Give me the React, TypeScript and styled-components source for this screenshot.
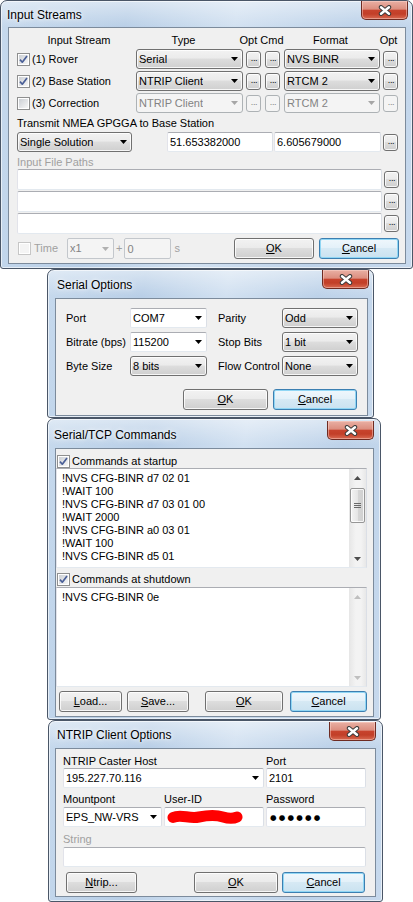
import React from "react";
import styled, { createGlobalStyle, css } from "styled-components";

const UI = `"Liberation Sans", Arial, sans-serif`;
const CAPTION = `"Liberation Sans", Arial, sans-serif`;

const Global = createGlobalStyle`
  *, *::before, *::after { box-sizing: border-box; }
  html, body { margin: 0; padding: 0; background: #ffffff; }
  body { font-family: ${UI}; font-size: 11px; color: #000; }
`;

/* ---------- window chrome ---------- */

const Desktop = styled.div`
  width: 413px;
  height: 902px;
  overflow: hidden;
  display: flex;
  flex-direction: column;
  align-items: flex-start;
  background: #fff;
`;

const Frame = styled.section<{ $x: number; $w: number; $h: number }>`
  flex: none;
  margin-left: ${(p) => p.$x}px;
  width: ${(p) => p.$w}px;
  height: ${(p) => p.$h}px;
  display: flex;
  flex-direction: column;
  border: 1px solid #4a5667;
  border-radius: 7px 7px 3px 3px;
  overflow: hidden;
  background: linear-gradient(180deg, rgba(255, 255, 255, 0.45) 0px, rgba(255, 255, 255, 0) 26px),
    linear-gradient(100deg, #c6d9ed 0%, #b9cfe7 28%, #d2e1f1 52%, #bdd2e9 78%, #c7d9ed 100%);
  box-shadow: inset 0 0 0 1px rgba(255, 255, 255, 0.6);
`;

const TitleBar = styled.header<{ $h: number }>`
  flex: none;
  height: ${(p) => p.$h}px;
  display: flex;
  align-items: flex-start;
  justify-content: space-between;
`;

const Caption = styled.h1<{ $x: number; $y: number }>`
  margin: ${(p) => p.$y - 8}px 0 0 ${(p) => p.$x}px;
  font: 400 12px/16px ${CAPTION};
  color: #000;
  white-space: nowrap;
  text-shadow: 0 0 7px rgba(255, 255, 255, 0.95), 0 0 3px rgba(255, 255, 255, 0.9);
`;

const CloseBtn = styled.div<{ $top: number; $right: number }>`
  flex: none;
  margin: ${(p) => p.$top}px ${(p) => p.$right}px 0 0;
  width: 47px;
  height: 19px;
  display: flex;
  align-items: center;
  justify-content: center;
  border: 1px solid #6e2b22;
  border-top: none;
  border-radius: 0 0 5px 5px;
  background: linear-gradient(180deg, #e9b0a4 0%, #dc8e7f 45%, #c7432d 52%, #c23f28 72%, #d86a52 100%);
  box-shadow: inset 0 0 0 1px rgba(255, 220, 210, 0.45);
`;

const Client = styled.div<{ $ml: number; $mr: number; $mb: number }>`
  flex: 1;
  min-height: 0;
  margin: 0 ${(p) => p.$mr}px ${(p) => p.$mb}px ${(p) => p.$ml}px;
  background: #f0f0f0;
  border: 1px solid #7c8b9c;
  display: flex;
  flex-direction: column;
`;

const CloseGlyph = () => (
  <svg width="14" height="11" viewBox="0 0 14 11">
    <path d="M3 2.2 L11 8.8 M11 2.2 L3 8.8" stroke="#3d3d3d" strokeWidth="4.4" strokeLinecap="round" />
    <path d="M3 2.2 L11 8.8 M11 2.2 L3 8.8" stroke="#ffffff" strokeWidth="2.4" strokeLinecap="round" />
  </svg>
);

type WinProps = {
  title: string;
  x: number;
  w: number;
  h: number;
  titleH: number;
  tx: number;
  ty: number;
  closeTop: number;
  closeRight: number;
  ml: number;
  mr: number;
  mb: number;
  children: React.ReactNode;
};

const Window = (p: WinProps) => (
  <Frame $x={p.x} $w={p.w} $h={p.h}>
    <TitleBar $h={p.titleH}>
      <Caption $x={p.tx} $y={p.ty}>{p.title}</Caption>
      <CloseBtn $top={p.closeTop} $right={p.closeRight}>
        <CloseGlyph />
      </CloseBtn>
    </TitleBar>
    <Client $ml={p.ml} $mr={p.mr} $mb={p.mb}>{p.children}</Client>
  </Frame>
);

/* ---------- controls ---------- */

const uiFont = css`
  font-family: ${UI};
  font-size: 11px;
  line-height: 13px;
`;

const faceNormal = css`
  border: 1px solid #707070;
  border-radius: 3px;
  background: linear-gradient(180deg, #f2f2f2 0%, #ebebeb 45%, #dddddd 50%, #cfcfcf 100%);
  box-shadow: inset 0 0 0 1px rgba(255, 255, 255, 0.8);
  color: #000;
`;

const faceDefault = css`
  border: 1px solid #3c7fb1;
  background: linear-gradient(180deg, #eff7fc 0%, #e4f1f9 45%, #d6e9f4 50%, #cae2f0 100%);
  box-shadow: inset 0 0 0 1px #90d6f4;
`;

const faceDisabled = css`
  border: 1px solid #adb2b5;
  background: #f4f4f4;
  box-shadow: none;
  color: #838383;
`;

const editFrame = css`
  background: #fff;
  border: 1px solid;
  border-color: #abadb3 #dbdfe6 #e3e9ef #e2e3ea;
  border-radius: 2px;
`;

const PushButton = styled.button<{ $w: number; $h?: number; $def?: boolean; $ml?: number }>`
  flex: none;
  width: ${(p) => p.$w}px;
  height: ${(p) => p.$h ?? 21}px;
  margin: 0 0 0 ${(p) => p.$ml ?? 0}px;
  padding: 0;
  ${uiFont}
  display: flex;
  align-items: center;
  justify-content: center;
  ${faceNormal}
  ${(p) => p.$def && faceDefault}
`;

const DotButton = styled.button<{ $disabled?: boolean; $ml?: number }>`
  flex: none;
  width: 15px;
  height: 17px;
  margin: 0 0 0 ${(p) => p.$ml ?? 0}px;
  padding: 0 0 3px 1px;
  align-self: center;
  font-family: ${UI};
  font-size: 9px;
  line-height: 11px;
  display: flex;
  align-items: flex-end;
  justify-content: center;
  letter-spacing: -0.3px;
  ${faceNormal}
  ${(p) => p.$disabled && faceDisabled}
`;

const DropList = styled.div<{ $w?: number; $disabled?: boolean; $h?: number }>`
  flex: none;
  ${(p) => (p.$w ? `width: ${p.$w}px;` : "")}
  height: ${(p) => p.$h ?? 20}px;
  display: flex;
  align-items: center;
  justify-content: space-between;
  padding: 0 4px 0 2px;
  ${faceNormal}
  ${(p) => p.$disabled && faceDisabled}
`;

const EditCombo = styled.div<{ $w?: number; $disabled?: boolean; $h?: number }>`
  flex: none;
  ${(p) => (p.$w ? `width: ${p.$w}px;` : "")}
  height: ${(p) => p.$h ?? 20}px;
  display: flex;
  align-items: center;
  justify-content: space-between;
  padding: 0 4px 0 2px;
  ${editFrame}
  ${(p) =>
    p.$disabled &&
    css`
      background: #f4f4f4;
      border-color: #c3c7cc;
      color: #838383;
    `}
`;

const TextBox = styled.div<{ $w?: number; $ml?: number; $disabled?: boolean; $h?: number }>`
  ${(p) => (p.$w ? `flex: none; width: ${p.$w}px;` : "flex: 1; min-width: 0;")}
  height: ${(p) => p.$h ?? 20}px;
  margin-left: ${(p) => p.$ml ?? 0}px;
  display: flex;
  align-items: center;
  padding: 0 2px;
  white-space: nowrap;
  overflow: hidden;
  ${editFrame}
  ${(p) =>
    p.$disabled &&
    css`
      background: #f4f4f4;
      border-color: #c3c7cc;
      color: #838383;
    `}
`;

const Value = styled.span`
  white-space: nowrap;
  overflow: hidden;
  line-height: 13px;
`;

const Arrow = ({ color = "#000" }: { color?: string }) => (
  <svg width="7" height="4" viewBox="0 0 7 4" style={{ flex: "none" }}>
    <path d="M0 0H7L3.5 4Z" fill={color} />
  </svg>
);

const CheckSvg = styled.svg`
  flex: none;
  display: block;
`;

const CheckBox = ({ checked, disabled }: { checked?: boolean; disabled?: boolean }) => (
  <CheckSvg width="13" height="13" viewBox="0 0 13 13">
    <defs>
      <linearGradient id={disabled ? "cbd" : "cbe"} x1="0" y1="0" x2="1" y2="1">
        <stop offset="0" stopColor={disabled ? "#f4f4f4" : "#cbcfd4"} />
        <stop offset="1" stopColor={disabled ? "#f4f4f4" : "#f7f7f7"} />
      </linearGradient>
    </defs>
    <rect x="0.5" y="0.5" width="12" height="12" fill="#fff" stroke={disabled ? "#c6c6c6" : "#8e8f8f"} />
    <rect x="2" y="2" width="9" height="9" fill={`url(#${disabled ? "cbd" : "cbe"})`} />
    {checked && (
      <path d="M3 6.6 L5.3 9.2 L10 3" fill="none" stroke="#4a5f97" strokeWidth="1.7" strokeLinejoin="round" />
    )}
  </CheckSvg>
);

const Label = styled.span<{ $gray?: boolean; $w?: number; $ml?: number }>`
  flex: none;
  ${(p) => (p.$w ? `width: ${p.$w}px;` : "")}
  margin-left: ${(p) => p.$ml ?? 0}px;
  line-height: 13px;
  white-space: nowrap;
  color: ${(p) => (p.$gray ? "#a0a0a0" : "#000")};
`;

/* ---------- Input Streams ---------- */

const StreamsBody = styled.div`
  display: flex;
  flex-direction: column;
  padding: 5px 0 0 8px;
`;

const StreamGrid = styled.div`
  display: grid;
  grid-template-columns: 116px 107px 16px 16px 96px 15px;
  grid-template-rows: 14px 20px 20px 20px;
  column-gap: 3px;
  row-gap: 2px;
`;

const HeadCell = styled.div<{ $span?: number; $pl?: number; $pr?: number }>`
  grid-column: span ${(p) => p.$span ?? 1};
  display: flex;
  justify-content: center;
  align-items: center;
  white-space: nowrap;
  padding-left: ${(p) => p.$pl ?? 0}px;
  padding-right: ${(p) => p.$pr ?? 0}px;
  line-height: 14px;
`;

const StreamName = styled.div`
  display: flex;
  align-items: center;
  gap: 2px;
`;

const Row = styled.div<{ $mt?: number; $h?: number }>`
  display: flex;
  align-items: center;
  margin-top: ${(p) => p.$mt ?? 0}px;
  ${(p) => (p.$h ? `height: ${p.$h}px;` : "")}
`;

const FileRows = styled.div`
  display: flex;
  flex-direction: column;
  gap: 1px;
  padding-right: 6px;
`;

const Spacer = styled.div<{ $w?: number }>`
  ${(p) => (p.$w !== undefined ? `flex: none; width: ${p.$w}px;` : "flex: 1;")}
`;

const streams = [
  { name: "(1) Rover", checked: true, type: "Serial", format: "NVS BINR", disabled: false },
  { name: "(2) Base Station", checked: true, type: "NTRIP Client", format: "RTCM 2", disabled: false },
  { name: "(3) Correction", checked: false, type: "NTRIP Client", format: "RTCM 2", disabled: true },
];

const InputStreams = () => (
  <Window
    title="Input Streams"
    x={0}
    w={413}
    h={269}
    titleH={26}
    tx={6}
    ty={14}
    closeTop={0}
    closeRight={4}
    ml={7}
    mr={6}
    mb={4}
  >
    <StreamsBody>
      <StreamGrid>
        <HeadCell $pl={8}>Input Stream</HeadCell>
        <HeadCell $pr={12}>Type</HeadCell>
        <HeadCell $span={2} $pr={4}>
          Opt Cmd
        </HeadCell>
        <HeadCell $pr={3}>Format</HeadCell>
        <HeadCell $pr={4}>Opt</HeadCell>
        {streams.map((s) => (
          <React.Fragment key={s.name}>
            <StreamName>
              <CheckBox checked={s.checked} />
              <Label>{s.name}</Label>
            </StreamName>
            <DropList $disabled={s.disabled}>
              <Value>{s.type}</Value>
              <Arrow color={s.disabled ? "#a6a6a6" : "#000"} />
            </DropList>
            <DotButton $disabled={s.disabled}>...</DotButton>
            <DotButton $disabled={s.disabled}>...</DotButton>
            <DropList $disabled={s.disabled}>
              <Value>{s.format}</Value>
              <Arrow color={s.disabled ? "#a6a6a6" : "#000"} />
            </DropList>
            <DotButton $disabled={s.disabled}>...</DotButton>
          </React.Fragment>
        ))}
      </StreamGrid>

      <Row $mt={3} $h={14}>
        <Label>Transmit NMEA GPGGA to Base Station</Label>
      </Row>
      <Row $mt={2}>
        <DropList $w={115}>
          <Value>Single Solution</Value>
          <Arrow />
        </DropList>
        <TextBox $w={106} $ml={35}>
          51.653382000
        </TextBox>
        <TextBox $w={107} $ml={1}>
          6.605679000
        </TextBox>
        <DotButton $ml={2}>...</DotButton>
      </Row>

      <Row $mt={4} $h={13}>
        <Label $gray>Input File Paths</Label>
      </Row>
      <FileRows>
        {[0, 1, 2].map((i) => (
          <Row key={i}>
            <TextBox $h={21} />
            <DotButton $ml={2}>...</DotButton>
          </Row>
        ))}
      </FileRows>

      <Row $mt={4} $h={21}>
        <Spacer $w={1} />
        <CheckBox disabled />
        <Label $gray $ml={3} $w={33}>
          Time
        </Label>
        <EditCombo $w={47} $h={21} $disabled>
          <Value>x1</Value>
          <Arrow color="#b0b0b0" />
        </EditCombo>
        <Label $gray $ml={2}>
          +
        </Label>
        <TextBox $w={47} $ml={2} $h={21} $disabled>
          0
        </TextBox>
        <Label $gray $ml={3}>
          s
        </Label>
        <Spacer />
        <PushButton $w={80}>
          <span>
            <u>O</u>K
          </span>
        </PushButton>
        <PushButton $w={80} $ml={5} $def>
          <span>
            <u>C</u>ancel
          </span>
        </PushButton>
        <Spacer $w={6} />
      </Row>
    </StreamsBody>
  </Window>
);

/* ---------- Serial Options ---------- */

const SerialBody = styled.div`
  display: flex;
  flex-direction: column;
  padding: 9px 10px 0 10px;
`;

const SerialGrid = styled.div`
  display: grid;
  grid-template-columns: 64px 88px 64px 76px;
  grid-auto-rows: 20px;
  row-gap: 4px;
  align-items: center;
`;

const ButtonRow = styled.div<{ $mt: number; $pr?: number }>`
  display: flex;
  align-items: center;
  justify-content: flex-end;
  margin-top: ${(p) => p.$mt}px;
  padding-right: ${(p) => p.$pr ?? 0}px;
`;

const SerialOptions = () => (
  <Window
    title="Serial Options"
    x={47}
    w={327}
    h={149}
    titleH={28}
    tx={9}
    ty={15}
    closeTop={0}
    closeRight={4}
    ml={7}
    mr={5}
    mb={1}
  >
    <SerialBody>
      <SerialGrid>
        <Label>Port</Label>
        <EditCombo $w={77}>
          <Value>COM7</Value>
          <Arrow />
        </EditCombo>
        <Label>Parity</Label>
        <DropList>
          <Value>Odd</Value>
          <Arrow />
        </DropList>

        <Label>Bitrate (bps)</Label>
        <EditCombo $w={77}>
          <Value>115200</Value>
          <Arrow />
        </EditCombo>
        <Label>Stop Bits</Label>
        <DropList>
          <Value>1 bit</Value>
          <Arrow />
        </DropList>

        <Label>Byte Size</Label>
        <DropList $w={77}>
          <Value>8 bits</Value>
          <Arrow />
        </DropList>
        <Label>Flow Control</Label>
        <DropList>
          <Value>None</Value>
          <Arrow />
        </DropList>
      </SerialGrid>
      <ButtonRow $mt={13}>
        <PushButton $w={85}>
          <span>
            <u>O</u>K
          </span>
        </PushButton>
        <PushButton $w={84} $ml={5} $def>
          <span>
            <u>C</u>ancel
          </span>
        </PushButton>
      </ButtonRow>
    </SerialBody>
  </Window>
);

/* ---------- Serial/TCP Commands ---------- */

const CmdBody = styled.div`
  display: flex;
  flex-direction: column;
  padding: 6px 6px 0 0;
`;

const CheckRow = styled.div<{ $mt?: number }>`
  display: flex;
  align-items: center;
  height: 13px;
  margin-top: ${(p) => p.$mt ?? 0}px;
  padding-left: 1px;
  gap: 2px;
`;

const Memo = styled.div<{ $mt?: number }>`
  height: 100px;
  margin-top: ${(p) => p.$mt ?? 0}px;
  display: flex;
  border: 1px solid;
  border-color: #abadb3 #dbdfe6 #e3e9ef #e2e3ea;
  background: #fff;
`;

const MemoText = styled.div`
  flex: 1;
  padding: 3px 0 0 5px;
  line-height: 13px;
  white-space: pre;
  overflow: hidden;
`;

const VScroll = styled.div`
  flex: none;
  width: 17px;
  display: flex;
  flex-direction: column;
  background: linear-gradient(90deg, #e6e6e6 0%, #f3f3f3 40%, #f3f3f3 70%, #e8e8e8 100%);
`;

const ScrollArrow = styled.div`
  flex: none;
  height: 17px;
  display: flex;
  align-items: center;
  justify-content: center;
`;

const Thumb = styled.div`
  flex: none;
  height: 35px;
  margin: 2px 1px 0 1px;
  border: 1px solid #969696;
  border-radius: 2px;
  background: linear-gradient(90deg, #f4f4f4 0%, #e6e6e6 50%, #d6d6d6 51%, #d0d0d0 100%);
  box-shadow: inset 0 0 0 1px rgba(255, 255, 255, 0.8);
  display: flex;
  align-items: center;
  justify-content: center;
`;

const Tri = ({ up, color }: { up?: boolean; color: string }) => (
  <svg width="7" height="4" viewBox="0 0 7 4">
    <path d={up ? "M0 4H7L3.5 0Z" : "M0 0H7L3.5 4Z"} fill={color} />
  </svg>
);

const Grip = () => (
  <svg width="7" height="6" viewBox="0 0 7 6">
    <path d="M0 0.5H7M0 2.5H7M0 4.5H7" stroke="#6a6a6a" strokeWidth="1" />
  </svg>
);

const startup = [
  "!NVS CFG-BINR d7 02 01",
  "!WAIT 100",
  "!NVS CFG-BINR d7 03 01 00",
  "!WAIT 2000",
  "!NVS CFG-BINR a0 03 01",
  "!WAIT 100",
  "!NVS CFG-BINR d5 01",
];

const CmdButtons = styled.div`
  display: flex;
  align-items: center;
  margin-top: 4px;
  padding-left: 3px;
`;

const Commands = () => (
  <Window
    title="Serial/TCP Commands"
    x={47}
    w={334}
    h={302}
    titleH={29}
    tx={6}
    ty={16}
    closeTop={2}
    closeRight={6}
    ml={7}
    mr={6}
    mb={2}
  >
    <CmdBody>
      <CheckRow>
        <CheckBox checked />
        <Label>Commands at startup</Label>
      </CheckRow>
      <Memo>
        <MemoText>{startup.join("\n")}</MemoText>
        <VScroll>
          <ScrollArrow>
            <Tri up color="#4d4d4d" />
          </ScrollArrow>
          <Thumb>
            <Grip />
          </Thumb>
          <Spacer />
          <ScrollArrow>
            <Tri color="#4d4d4d" />
          </ScrollArrow>
        </VScroll>
      </Memo>
      <CheckRow $mt={5}>
        <CheckBox checked />
        <Label>Commands at shutdown</Label>
      </CheckRow>
      <Memo $mt={1}>
        <MemoText>!NVS CFG-BINR 0e</MemoText>
        <VScroll>
          <ScrollArrow>
            <Tri up color="#bfbfbf" />
          </ScrollArrow>
          <Spacer />
          <ScrollArrow>
            <Tri color="#bfbfbf" />
          </ScrollArrow>
        </VScroll>
      </Memo>
      <CmdButtons>
        <PushButton $w={63}>
          <span>
            <u>L</u>oad...
          </span>
        </PushButton>
        <PushButton $w={62} $ml={5}>
          <span>
            <u>S</u>ave...
          </span>
        </PushButton>
        <PushButton $w={78} $ml={16}>
          <span>
            <u>O</u>K
          </span>
        </PushButton>
        <PushButton $w={77} $ml={7} $def>
          <span>
            <u>C</u>ancel
          </span>
        </PushButton>
      </CmdButtons>
    </CmdBody>
  </Window>
);

/* ---------- NTRIP Client Options ---------- */

const NtripBody = styled.div`
  display: flex;
  flex-direction: column;
  padding: 6px 8px 0 7px;
`;

const FieldGrid = styled.div<{ $h: number; $mt?: number }>`
  display: grid;
  grid-template-columns: 99px 100px 100px;
  column-gap: 2px;
  height: ${(p) => p.$h}px;
  margin-top: ${(p) => p.$mt ?? 0}px;
  align-items: center;
`;

const Span = styled.div<{ $n: number }>`
  grid-column: span ${(p) => p.$n};
  display: flex;
  min-width: 0;
`;

const Dots = styled.span`
  font-family: "DejaVu Sans", sans-serif;
  font-size: 7.5px;
  line-height: 13px;
  letter-spacing: 2.2px;
  padding-left: 1px;
`;

const Scribble = () => (
  <svg width="80" height="16" viewBox="0 0 80 16" style={{ display: "block" }}>
    <path
      d="M6 8.5 C 14 5, 22 10, 32 8 S 48 5.5, 56 8 S 68 9, 70 8"
      fill="none"
      stroke="#ff0000"
      strokeWidth="11"
      strokeLinecap="round"
    />
  </svg>
);

const Ntrip = () => (
  <Window
    title="NTRIP Client Options"
    x={48}
    w={335}
    h={182}
    titleH={27}
    tx={8}
    ty={14}
    closeTop={1}
    closeRight={6}
    ml={6}
    mr={6}
    mb={4}
  >
    <NtripBody>
      <FieldGrid $h={13}>
        <Span $n={2}>
          <Label>NTRIP Caster Host</Label>
        </Span>
        <Label>Port</Label>
      </FieldGrid>
      <FieldGrid $h={20}>
        <Span $n={2}>
          <EditCombo style={{ flex: 1 }}>
            <Value>195.227.70.116</Value>
            <Arrow />
          </EditCombo>
        </Span>
        <TextBox>2101</TextBox>
      </FieldGrid>
      <FieldGrid $h={13} $mt={5}>
        <Label>Mountpont</Label>
        <Label>User-ID</Label>
        <Label>Password</Label>
      </FieldGrid>
      <FieldGrid $h={20} $mt={1}>
        <EditCombo>
          <Value>EPS_NW-VRS</Value>
          <Arrow />
        </EditCombo>
        <TextBox>
          <Scribble />
        </TextBox>
        <TextBox>
          <Dots>●●●●●●</Dots>
        </TextBox>
      </FieldGrid>
      <FieldGrid $h={13} $mt={6}>
        <Label $gray>String</Label>
      </FieldGrid>
      <FieldGrid $h={20} $mt={1}>
        <Span $n={3}>
          <TextBox />
        </Span>
      </FieldGrid>
      <Row $mt={5}>
        <PushButton $w={71} $ml={3}>
          <span>
            <u>N</u>trip...
          </span>
        </PushButton>
        <PushButton $w={84} $ml={57}>
          <span>
            <u>O</u>K
          </span>
        </PushButton>
        <PushButton $w={83} $ml={4} $def>
          <span>
            <u>C</u>ancel
          </span>
        </PushButton>
      </Row>
    </NtripBody>
  </Window>
);

export default function App() {
  return (
    <>
      <Global />
      <Desktop>
        <InputStreams />
        <SerialOptions />
        <Commands />
        <Ntrip />
      </Desktop>
    </>
  );
}
